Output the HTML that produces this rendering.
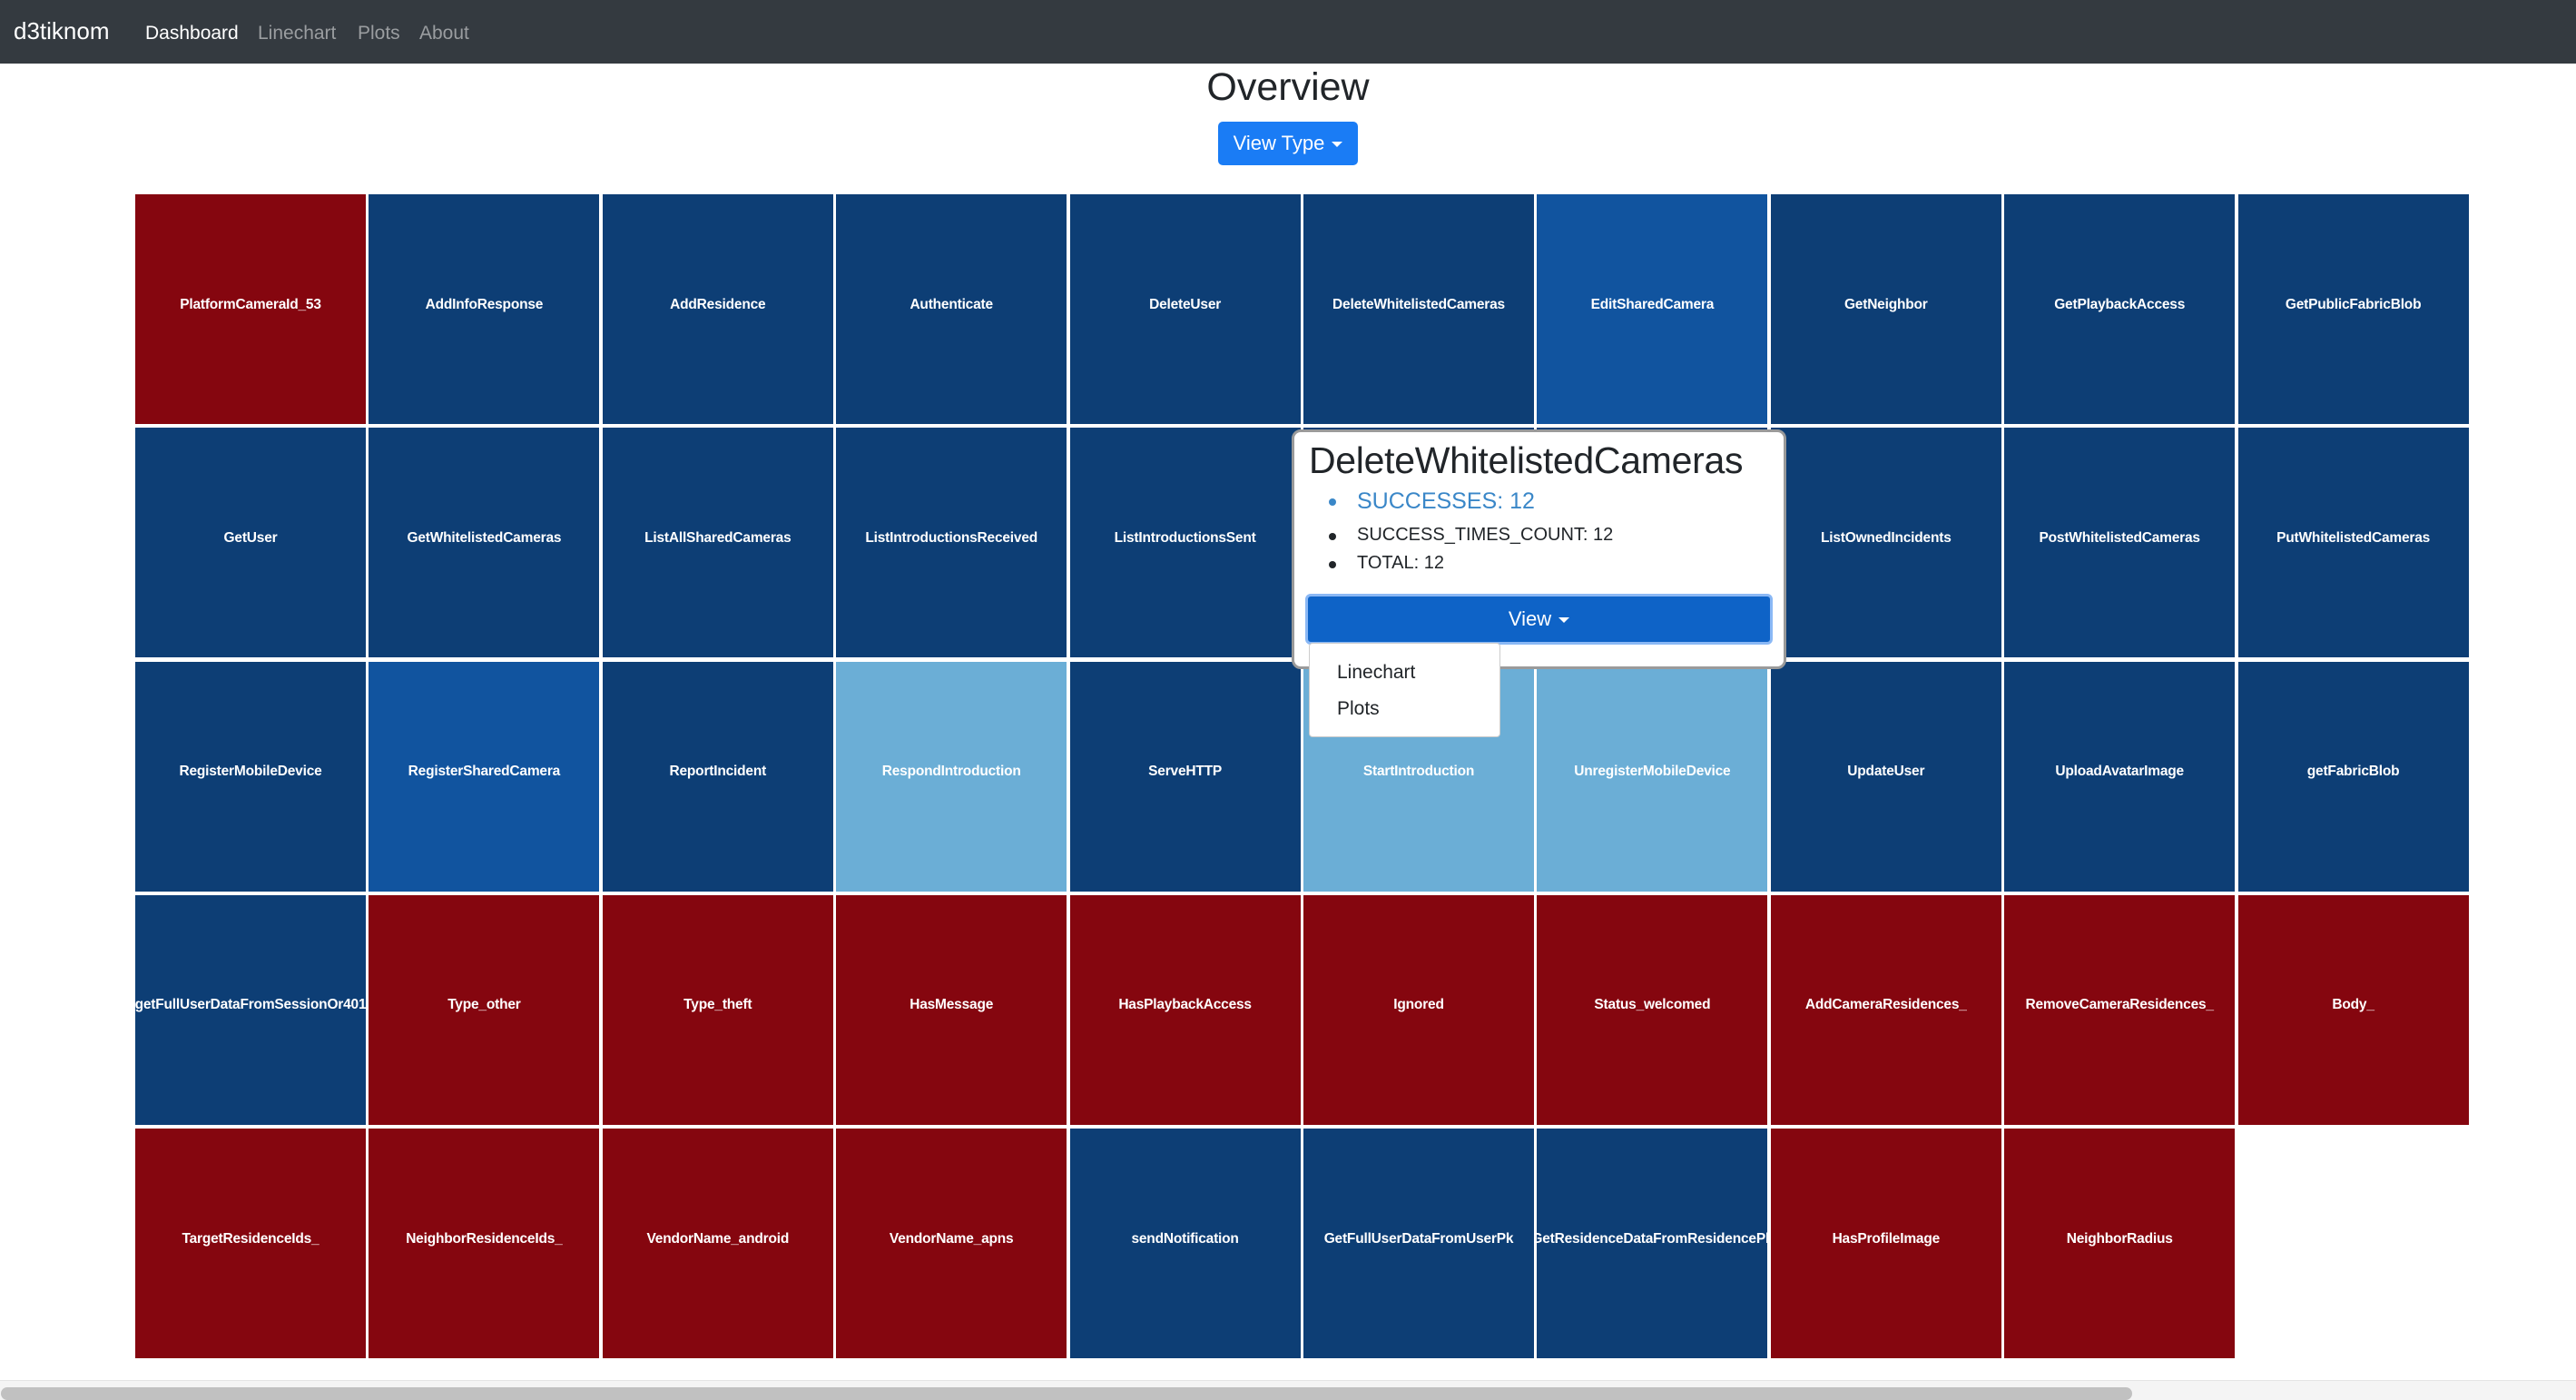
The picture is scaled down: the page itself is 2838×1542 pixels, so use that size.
<!DOCTYPE html>
<html><head><meta charset="utf-8"><style>
*{box-sizing:border-box;margin:0;padding:0}
body{width:2838px;height:1542px;overflow:hidden;background:#fff;font-family:"Liberation Sans",sans-serif;position:relative}
.nav{position:absolute;left:0;top:0;width:2838px;height:70px;background:#343a40}
.brand{position:absolute;left:15px;top:19px;font-size:26px;color:#fff}
.nl{position:absolute;top:25px;font-size:21px;color:#9a9da0}
h1{position:absolute;left:0;width:2838px;top:72px;text-align:center;font-weight:normal;font-size:43px;color:#212529}
.vt{position:absolute;left:1342px;top:134px;width:154px;height:48px;background:#1a7cf5;border-radius:5px;color:#fff;font-size:22px;line-height:48px;text-align:center}
.car{display:inline-block;width:0;height:0;border-left:6px solid transparent;border-right:6px solid transparent;border-top:6px solid #fff;vertical-align:middle;margin-left:8px}
.c{position:absolute;width:254px;height:253px;display:flex;align-items:center;justify-content:center;overflow:hidden;white-space:nowrap;color:#fff;font-size:15.5px;font-weight:bold;padding-bottom:10px;letter-spacing:-0.2px}
.d{background:#0d3e75}.r{background:#85060f}.m{background:#11549f}.l{background:#6baed6}
.tip{position:absolute;left:1423px;top:473px;width:545px;height:264px;background:#fff;border:3px solid #9a9a9a;border-radius:10px}
.tt{position:absolute;left:16px;top:8px;font-size:41px;color:#212529;letter-spacing:-0.3px}
.li{position:absolute;left:69px;font-size:20px;color:#212529}
.dot{position:absolute;left:-31px;top:9px;width:8px;height:8px;border-radius:50%;background:#212529}
.vb{position:absolute;left:12px;top:178px;width:515px;height:56px;background:#0e63c7;border:3px solid #8ab8f5;border-radius:6px;color:#fff;font-size:22px;text-align:center;line-height:50px}
.dd{position:absolute;left:1442px;top:708px;width:211px;height:104px;background:#fff;border:1px solid #ccc;border-radius:4px}
.dd div{position:absolute;left:30px;font-size:21px;color:#212529}
.sb{position:absolute;left:0;top:1520px;width:2838px;height:22px;background:#f4f4f4;border-top:1px solid #e4e4e4}
.th{position:absolute;left:1px;top:7px;width:2348px;height:14px;background:#c1c1c1;border-radius:7px}
</style></head><body>
<div class="nav"><div class="brand">d3tiknom</div>
<div class="nl" style="left:160px;color:#fff">Dashboard</div>
<div class="nl" style="left:284px">Linechart</div>
<div class="nl" style="left:394px">Plots</div>
<div class="nl" style="left:462px">About</div></div>
<h1>Overview</h1>
<div class="vt">View Type<span class="car"></span></div>
<div id="g"></div>
<script>
var rows=[
[["PlatformCameraId_53","r"],["AddInfoResponse","d"],["AddResidence","d"],["Authenticate","d"],["DeleteUser","d"],["DeleteWhitelistedCameras","d"],["EditSharedCamera","m"],["GetNeighbor","d"],["GetPlaybackAccess","d"],["GetPublicFabricBlob","d"]],
[["GetUser","d"],["GetWhitelistedCameras","d"],["ListAllSharedCameras","d"],["ListIntroductionsReceived","d"],["ListIntroductionsSent","d"],["","d"],["","d"],["ListOwnedIncidents","d"],["PostWhitelistedCameras","d"],["PutWhitelistedCameras","d"]],
[["RegisterMobileDevice","d"],["RegisterSharedCamera","m"],["ReportIncident","d"],["RespondIntroduction","l"],["ServeHTTP","d"],["StartIntroduction","l"],["UnregisterMobileDevice","l"],["UpdateUser","d"],["UploadAvatarImage","d"],["getFabricBlob","d"]],
[["getFullUserDataFromSessionOr401","d"],["Type_other","r"],["Type_theft","r"],["HasMessage","r"],["HasPlaybackAccess","r"],["Ignored","r"],["Status_welcomed","r"],["AddCameraResidences_","r"],["RemoveCameraResidences_","r"],["Body_","r"]],
[["TargetResidenceIds_","r"],["NeighborResidenceIds_","r"],["VendorName_android","r"],["VendorName_apns","r"],["sendNotification","d"],["GetFullUserDataFromUserPk","d"],["GetResidenceDataFromResidencePk","d"],["HasProfileImage","r"],["NeighborRadius","r"]]];
var h="";rows.forEach(function(r,i){r.forEach(function(c,j){h+='<div class="c '+c[1]+'" style="left:'+(149+j*257.4)+'px;top:'+(214+i*257.3)+'px">'+c[0]+'</div>';});});
document.getElementById("g").innerHTML=h;
</script>
<div class="tip"><div class="tt">DeleteWhitelistedCameras</div>
<div class="li" style="top:62px;font-size:25px;color:#3a87c8"><span class="dot" style="background:#3a87c8;top:11px"></span>SUCCESSES: 12</div>
<div class="li" style="top:102px"><span class="dot"></span>SUCCESS_TIMES_COUNT: 12</div>
<div class="li" style="top:133px"><span class="dot"></span>TOTAL: 12</div>
<div class="vb">View<span class="car"></span></div></div>
<div class="dd"><div style="top:20px">Linechart</div><div style="top:60px">Plots</div></div>
<div class="sb"><div class="th"></div></div>
</body></html>
